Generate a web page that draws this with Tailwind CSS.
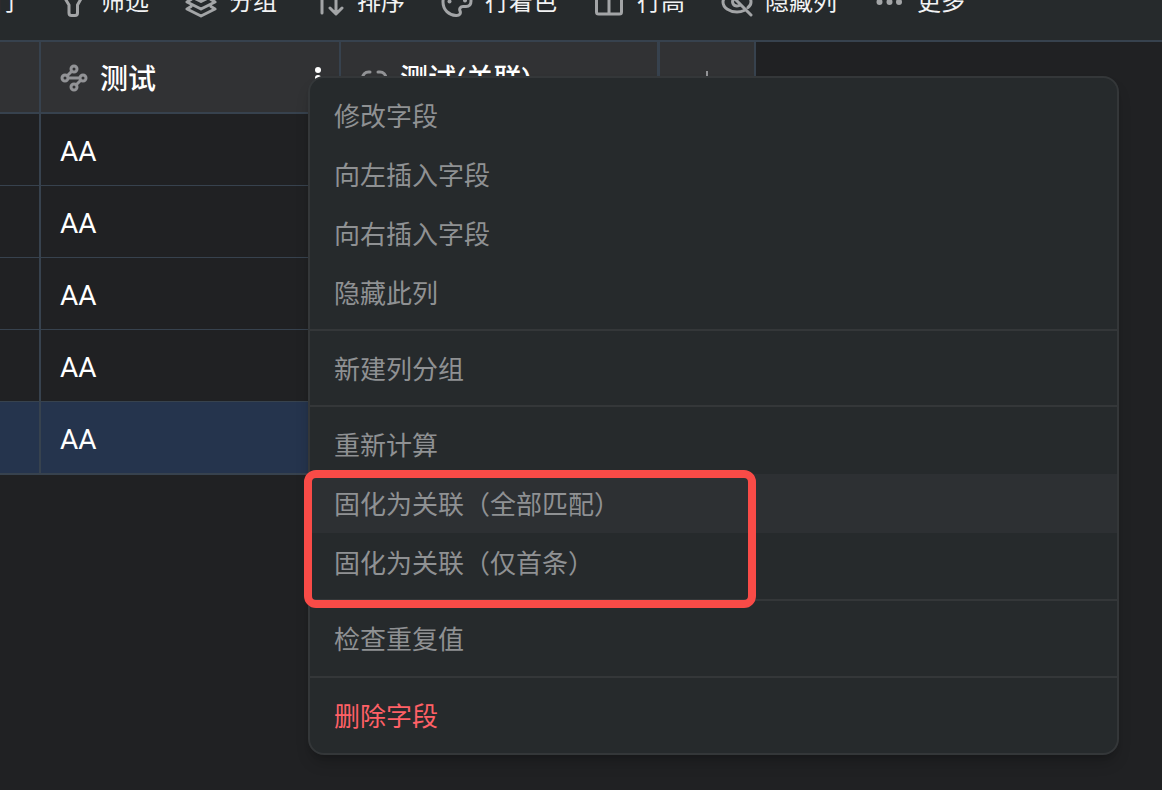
<!DOCTYPE html>
<html lang="zh-CN">
<head>
<meta charset="utf-8">
<meta name="viewport" content="width=device-width, initial-scale=1">
<title>测试</title>
<script src="https://cdn.jsdelivr.net/npm/@tailwindcss/browser@4"></script>
</head>
<body class="relative min-h-screen overflow-hidden bg-[#202123] font-['Roboto','Noto_Sans_CJK_SC',sans-serif] text-white">

<!-- Toolbar, scrolled partly out of view -->
<header class="flex h-[42px] flex-col justify-end overflow-hidden border-b-2 border-[#37424e] bg-[#262a2c]">
  <nav class="-ml-[7px] flex h-[76px] shrink-0 items-center gap-9 text-2xl whitespace-nowrap text-[#f2f3f4]">
    <button type="button" class="mr-1">行</button>
    <button type="button" class="flex items-center gap-3">
      <svg class="size-8 text-[#a3a5a7]" viewBox="0 0 32 32" fill="none" stroke="currentColor" stroke-width="3" stroke-linecap="round" stroke-linejoin="round"><path d="M3 4h26l-8.500 15v8q0 2.500-2.500 2.500h-3.500q-2.500 0-2.500-2.500v-8z"/></svg>筛选</button>
    <button type="button" class="flex items-center gap-3">
      <svg class="size-8 text-[#a3a5a7]" viewBox="0 0 32 32" fill="none" stroke="currentColor" stroke-width="3" stroke-linecap="round" stroke-linejoin="round"><path d="M16 1 30 8.500 16 15.500 2 8.500zM6 13.500 2 16l14 7 14-7-4-2.500M6 20.500 2 23l14 7 14-7-4-2.500"/></svg>分组</button>
    <button type="button" class="flex items-center gap-3">
      <svg class="size-8 text-[#a3a5a7]" viewBox="0 0 32 32" fill="none" stroke="currentColor" stroke-width="3" stroke-linecap="round" stroke-linejoin="round"><path d="M4 9l5-5v23M17 22l6 6 6-6M23 27V4"/></svg>排序</button>
    <button type="button" class="flex items-center gap-3">
      <svg class="size-8 text-[#a3a5a7]" viewBox="0 0 32 32" fill="none" stroke="currentColor" stroke-width="3" stroke-linecap="round" stroke-linejoin="round"><path d="M30 15C30 7 24 2 16 2S2 8 2 16c0 8 6 13 13 13.500 4 .3 5-2.500 4-4.500-1-2.500.5-4.500 3-4.500h3c3 0 5-2 5-5.500z"/><g fill="currentColor" stroke="none"><circle cx="8.500" cy="15.500" r="2"/><circle cx="12" cy="9" r="2"/><circle cx="20" cy="9" r="2"/><circle cx="24" cy="14.500" r="2"/></g></svg>行着色</button>
    <button type="button" class="flex items-center gap-3">
      <svg class="size-8 text-[#a3a5a7]" viewBox="0 0 32 32" fill="none" stroke="currentColor" stroke-width="3" stroke-linejoin="round"><rect x="3.500" y="3" width="25" height="25" rx="2"/><path d="M16 3v25"/></svg>行高</button>
    <button type="button" class="flex items-center gap-3">
      <svg class="size-8 text-[#a3a5a7]" viewBox="0 0 32 32" fill="none" stroke="currentColor" stroke-width="3" stroke-linecap="round"><path d="M4 3l26 26M8 8c-3 2-6 5-6 8 0 6 7 10 14 10 3 0 5-.5 7-1.500M13 5c9-1 17 5 17 11 0 2-1 4-3 5.500M12.500 13c-2 3-.5 7 3.500 7 1.500 0 2.500-.5 3.500-1.500"/></svg>隐藏列</button>
    <button type="button" class="flex items-center gap-3">
      <svg class="size-8 text-[#a3a5a7]" viewBox="0 0 32 32" fill="currentColor"><circle cx="6.500" cy="16" r="3"/><circle cx="16.500" cy="16" r="3"/><circle cx="26" cy="16" r="3"/></svg>更多</button>
  </nav>
</header>

<!-- Data grid -->
<table class="table-fixed border-separate border-spacing-0 text-left text-[28px]">
  <colgroup><col class="w-[41px]"><col class="w-[300px]"><col class="w-[319px]"><col class="w-[96px]"></colgroup>
  <thead>
    <tr class="h-[72px] bg-[#313234]">
      <th class="border-r-2 border-b-2 border-[#37424e] p-0"></th>
      <th scope="col" class="border-r-2 border-b-2 border-[#37424e] pt-[2px] pr-[17px] pb-0 pl-[19px] font-medium">
        <div class="flex items-center">
          <svg class="mr-3 size-7 text-[#929396]" viewBox="0 0 28 28" fill="none" stroke="currentColor" stroke-width="3"><circle cx="14" cy="5" r="3"/><circle cx="5" cy="14" r="3"/><circle cx="23" cy="14" r="3"/><circle cx="14" cy="23" r="3"/><path d="M7 12l5-5M8 14h12M21 16l-5 5"/></svg>
          <span class="pt-1">测试</span>
          <button type="button" aria-label="字段菜单" class="ml-auto"><svg class="h-6 w-2" viewBox="0 0 8 24" fill="currentColor"><circle cx="4" cy="4" r="3"/><circle cx="4" cy="12" r="3"/><circle cx="4" cy="20" r="3"/></svg></button>
        </div>
      </th>
      <th scope="col" class="border-r-[3px] border-b-2 border-[#37424e] pt-[2px] pr-3 pb-0 pl-[19px] font-medium">
        <div class="flex items-center">
          <svg class="mr-3 size-7 text-[#929396]" viewBox="0 0 28 28" fill="none" stroke="currentColor" stroke-width="3" stroke-linecap="round"><path d="M10 8H8.500a6 6 0 0 0 0 12H10M18 8h2a6 6 0 0 1 0 12h-2M10 14h8"/></svg>
          <span class="pt-1">测试(关联)</span>
        </div>
      </th>
      <th class="border-r-2 border-b-2 border-[#37424e] p-0 text-center">
        <button type="button" aria-label="添加字段" class="align-middle"><svg class="size-5 text-[#929396]" viewBox="0 0 20 20" fill="none" stroke="currentColor" stroke-width="2"><path d="M10 2v16M2 10h16"/></svg></button>
      </th>
    </tr>
  </thead>
  <tbody>
    <tr class="h-[72px]"><td class="border-r-2 border-b border-[#37424e] p-0"></td><td class="border-r border-b border-[#37424e] pt-1 pb-0 pl-[19px]">AA</td><td class="border-r border-b border-[#37424e]"></td><td></td></tr>
    <tr class="h-[72px]"><td class="border-r-2 border-b border-[#37424e] p-0"></td><td class="border-r border-b border-[#37424e] pt-1 pb-0 pl-[19px]">AA</td><td class="border-r border-b border-[#37424e]"></td><td></td></tr>
    <tr class="h-[72px]"><td class="border-r-2 border-b border-[#37424e] p-0"></td><td class="border-r border-b border-[#37424e] pt-1 pb-0 pl-[19px]">AA</td><td class="border-r border-b border-[#37424e]"></td><td></td></tr>
    <tr class="h-[72px]"><td class="border-r-2 border-b border-[#37424e] p-0"></td><td class="border-r border-b border-[#37424e] pt-1 pb-0 pl-[19px]">AA</td><td class="border-r border-b border-[#37424e]"></td><td></td></tr>
    <tr class="h-[73px] bg-[#25344d]"><td class="border-r-2 border-b-2 border-[#37424e] p-0"></td><td class="border-r border-b-2 border-[#37424e] pt-1 pb-0 pl-[19px]">AA</td><td class="border-r border-b-2 border-[#37424e]"></td><td></td></tr>
  </tbody>
</table>

<!-- Column menu -->
<div role="menu" class="absolute top-[76px] right-[43px] left-[308px] divide-y-2 divide-[#343739] rounded-2xl border-2 border-[#343739] bg-[#262a2c] text-[26px] text-[#8f9193] shadow-lg shadow-black/20">
  <div class="pt-2 pb-[7px]">
    <button type="button" role="menuitem" class="flex h-[59px] w-full items-center px-6 pt-[3px]">修改字段</button>
    <button type="button" role="menuitem" class="flex h-[59px] w-full items-center px-6 pt-[3px]">向左插入字段</button>
    <button type="button" role="menuitem" class="flex h-[59px] w-full items-center px-6 pt-[3px]">向右插入字段</button>
    <button type="button" role="menuitem" class="flex h-[59px] w-full items-center px-6 pt-[3px]">隐藏此列</button>
  </div>
  <div class="pt-2 pb-[7px]">
    <button type="button" role="menuitem" class="flex h-[59px] w-full items-center px-6 pt-[3px]">新建列分组</button>
  </div>
  <div class="pt-2 pb-[7px]">
    <button type="button" role="menuitem" class="flex h-[59px] w-full items-center px-6 pt-[3px]">重新计算</button>
    <div class="relative">
      <button type="button" role="menuitem" class="flex h-[59px] w-full items-center bg-[#2d3033] px-6 pt-[3px]">固化为关联（全部匹配）</button>
      <button type="button" role="menuitem" class="flex h-[59px] w-full items-center px-6 pt-[3px]">固化为关联（仅首条）</button>
      <!-- Highlight frame -->
      <div class="pointer-events-none absolute -top-1 -left-[6px] h-[138px] w-[452px] rounded-xl border-8 border-[#f94b47]"></div>
    </div>
  </div>
  <div class="py-2">
    <button type="button" role="menuitem" class="flex h-[59px] w-full items-center px-6 pt-[3px]">检查重复值</button>
  </div>
  <div class="py-2">
    <button type="button" role="menuitem" class="flex h-[59px] w-full items-center px-6 pt-[3px] text-[#ff6066]">删除字段</button>
  </div>
</div>
</body>
</html>
